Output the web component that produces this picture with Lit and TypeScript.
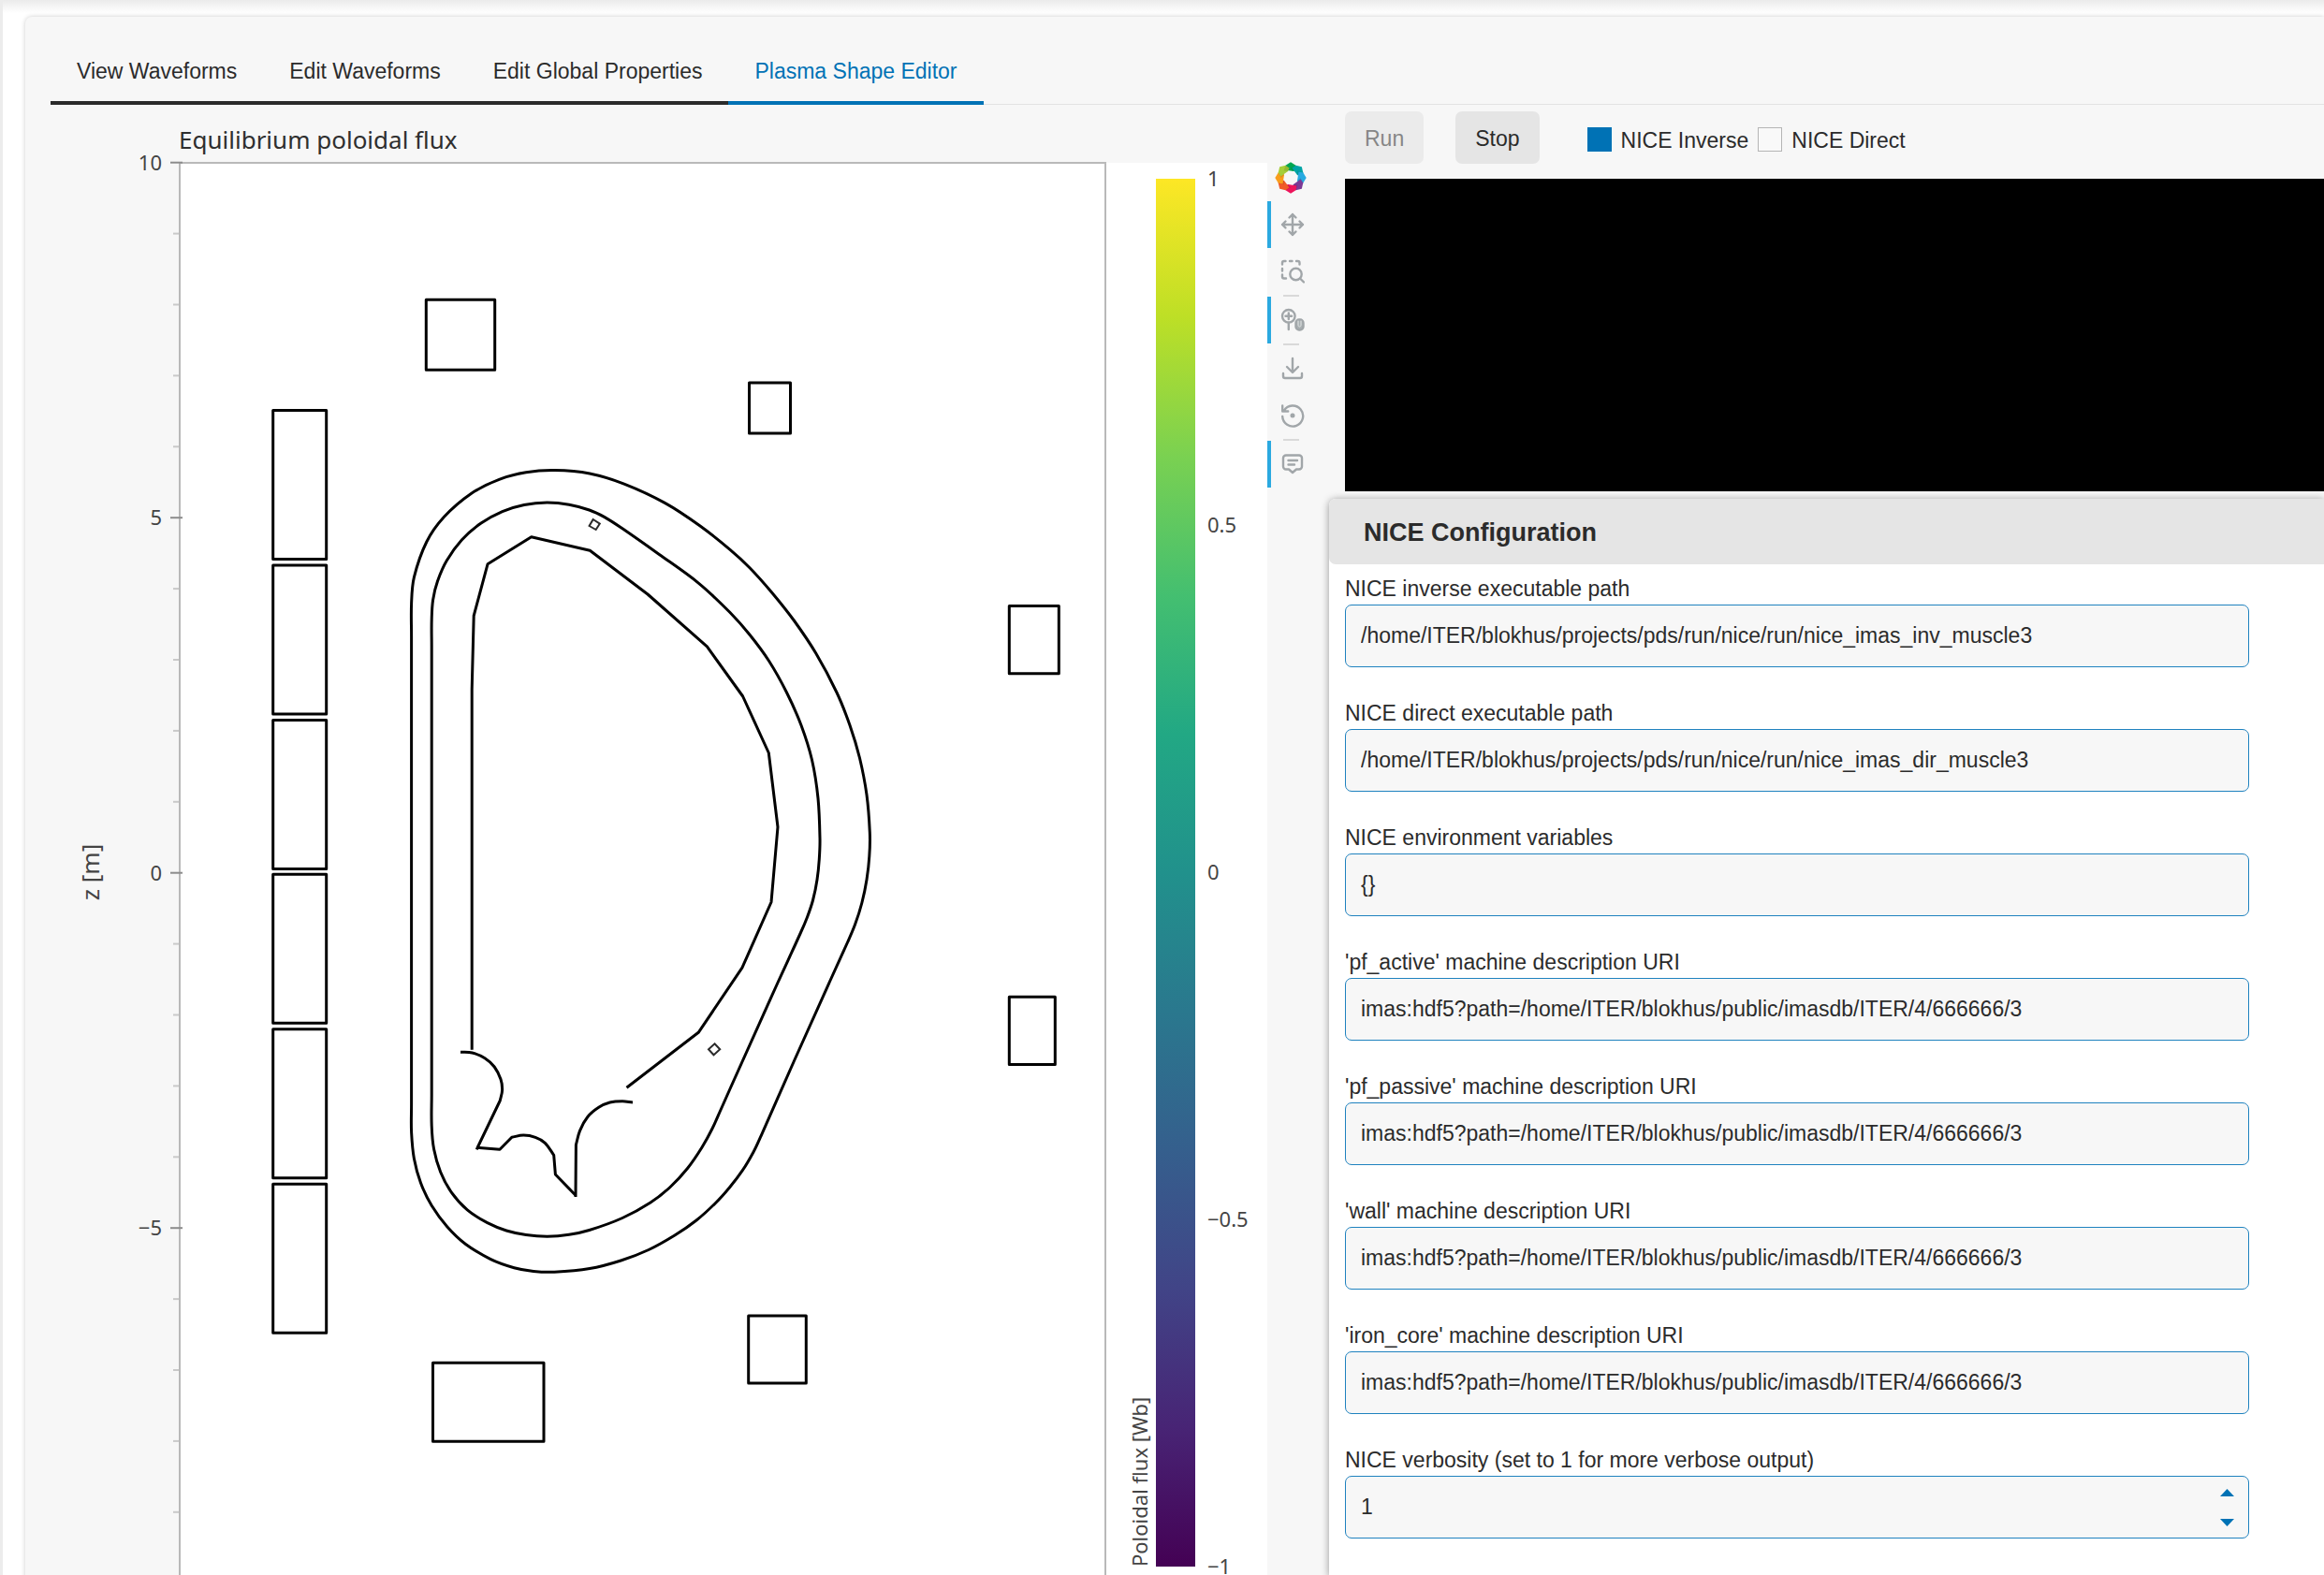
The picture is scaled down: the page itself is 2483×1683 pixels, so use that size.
import { LitElement, html, css, svg } from "lit";
import { customElement, property, state } from "lit/decorators.js";
import { classMap } from "lit/directives/class-map.js";

type Pt = [number, number];

/** Smooth spline through the points, written as a cubic Bézier path. */
function smooth(points: Pt[], closed = false): string {
  const n = points.length;
  const at = (i: number): Pt =>
    closed ? points[(i + n) % n] : points[Math.max(0, Math.min(n - 1, i))];
  let d = `M${points[0][0]} ${points[0][1]}`;
  const last = closed ? n : n - 1;
  for (let i = 0; i < last; i++) {
    const [p0, p1, p2, p3] = [at(i - 1), at(i), at(i + 1), at(i + 2)];
    const len = Math.hypot(p2[0] - p1[0], p2[1] - p1[1]);
    const h = (a: Pt, b: Pt): Pt => {
      const l = Math.hypot(b[0] - a[0], b[1] - a[1]) || 1;
      return [((b[0] - a[0]) / l) * (len / 3), ((b[1] - a[1]) / l) * (len / 3)];
    };
    const t1 = h(p0, p2);
    const t2 = h(p1, p3);
    d += `C${(p1[0] + t1[0]).toFixed(1)} ${(p1[1] + t1[1]).toFixed(1)} ${(p2[0] - t2[0]).toFixed(1)} ${(p2[1] - t2[1]).toFixed(1)} ${p2[0]} ${p2[1]}`;
  }
  return closed ? d + "Z" : d;
}

const OUTER: Pt[] = [
  [439.6, 645], [442.4, 616.8], [455.8, 579], [474.3, 552.5], [503.3, 527.5], [533.3, 512.3],
  [562, 504.8], [592.4, 502.6], [630, 506], [666.8, 517.1], [710.7, 537.6],
  [748, 562], [780, 587.3], [801, 606.7], [824.3, 632.7], [848.3, 663], [871.7, 698],
  [894, 740], [908, 775], [918.5, 810], [926, 849.3], [929.3, 889.5], [928.8, 915],
  [926, 940], [920.8, 965], [913.5, 988], [905.5, 1007], [886, 1050], [848.3, 1134],
  [813.3, 1213.3], [805, 1231], [793.3, 1250.7], [780, 1268.3], [764.8, 1285.2],
  [744, 1304], [720.9, 1320], [693, 1335.5], [663.4, 1347], [630, 1355.6], [592.4, 1359.2],
  [570, 1358.4], [549.3, 1354.7], [524.3, 1345.6], [497.5, 1329.5], [477.9, 1311],
  [461.2, 1288.3], [449.5, 1264], [442.4, 1238], [439.6, 1210], [439.6, 1180], [439.6, 680],
];

const INNER: Pt[] = [
  [461.2, 662], [462.6, 641], [467.5, 621], [477.3, 599], [493.3, 577], [514, 559],
  [536.7, 546.6], [560, 539.5], [584.6, 537], [608, 539.2], [629.6, 545],
  [646, 552.6], [665, 564.8], [704, 592.2], [746, 622.8], [780, 654.5],
  [801, 678.3], [821.7, 706.5], [840.5, 740], [856, 775], [867.5, 812], [874, 853], [876, 895.2],
  [875.3, 918], [873, 940], [868.5, 962], [862.5, 980], [855.5, 996.5], [831, 1050], [780, 1163.5],
  [770, 1186], [761, 1206], [750, 1226], [734.5, 1248.5], [716, 1268.5], [695, 1285],
  [665, 1301.5], [629.6, 1314.5], [608, 1319.3], [584.6, 1321.2], [562, 1319.5], [541, 1315],
  [520.7, 1306.7], [499.3, 1292.8], [482.5, 1274.3], [470.7, 1252.5], [463.6, 1228],
  [461.2, 1203], [461.2, 1170], [461.2, 690],
];

const LIMITER =
  "504.2,1121.7 504.2,736.4 506.2,658 521,602.8 567.7,573.8 630.3,588.3 692,635 755.4,690.9 793.6,744 821.3,804.5 831,883.7 824,964 792.9,1034.2 746.2,1103.3 669.5,1162.3";

const DIVERTOR_LEFT = smooth([
  [492, 1124.3], [504.5, 1125], [518, 1130.7], [528.2, 1140], [535, 1153.3], [536.6, 1165], [534.3, 1176],
]) + "L509.2 1228.3";
const DIVERTOR_DOME =
  "M509.2 1226.3L534 1228.3L546.8 1215.3" +
  smooth([[546.8, 1215.3], [559.3, 1213], [572, 1215.3], [582.3, 1221.3], [591.7, 1234.3]]).replace(/^M[^C]+/, "") +
  "L593.4 1255L615 1277.3";
const DIVERTOR_RIGHT = "M615 1279L615.4 1223.3" +
  smooth([[615.4, 1223.3], [619.5, 1208.3], [628, 1193.3], [639.7, 1183.3], [651.6, 1178], [665, 1176.7], [676, 1178]]).replace(/^M[^C]+/, "");

/** Coil outlines: x, y, width, height. */
const COILS = [
  [291.7, 438.5, 57, 159], [291.7, 604, 57, 159], [291.7, 769.5, 57, 159],
  [291.7, 934.3, 57, 159], [291.7, 1099.8, 57, 159], [291.7, 1265.3, 57, 159],
  [455.3, 320.3, 73.4, 75], [800.5, 409, 44, 54], [1078.3, 647.4, 53, 72.3],
  [1078.3, 1065.2, 49, 72.3], [799.7, 1406, 61.6, 72], [462.5, 1456.3, 118.5, 84],
];

const VIRIDIS = ["#440154", "#482475", "#414487", "#355f8d", "#2a788e", "#21918c", "#22a884", "#44bf70", "#7ad151", "#bddf26", "#fde725"];

const yOf = (z: number) => 932.7 - z * 75.9;

@customElement("flux-plot")
class FluxPlot extends LitElement {
  static styles = css`
    :host { display: block; }
    .plot { display: block; width: 100%; height: auto; font-family: "Noto Sans", "Open Sans", sans-serif; }
    .title { font-size: 26px; fill: #2f2f2f; }
    .tick { font-size: 22px; fill: #444; }
    .axis { font-size: 26px; fill: #444; }
    .bar-title { font-size: 22px; fill: #444; }
    .frame { stroke: #b9b9b9; stroke-width: 2; fill: none; }
    .major { stroke: #8c8c8c; stroke-width: 2; }
    .minor { stroke: #c9c9c9; stroke-width: 2; }
    .shape { fill: none; stroke: #000; stroke-width: 3; stroke-linejoin: round; }
    .probe { fill: none; stroke: #2a2a2a; stroke-width: 2; }
  `;

  render() {
    const minors = Array.from({ length: 21 }, (_, i) => 10 - i).filter((z) => z % 5 !== 0);
    return html`<svg class="plot" viewBox="54 112 1300 1600" role="img" aria-label="Equilibrium poloidal flux">
      <defs>
        <linearGradient id="viridis" x1="0" y1="1" x2="0" y2="0">
          ${VIRIDIS.map((c, i) => svg`<stop offset=${i / 10} stop-color=${c}></stop>`)}
        </linearGradient>
      </defs>
      <rect x="192" y="174" width="1162" height="1540" fill="#fff"></rect>
      <path class="frame" d="M192 1712V174H1181V1712"></path>
      ${minors.map((z) => svg`<line class="minor" x1="185" x2="191" y1=${yOf(z)} y2=${yOf(z)}></line>`)}
      ${[10, 5, 0, -5, -10].map((z) => svg`
        <line class="major" x1="182" x2="195" y1=${yOf(z)} y2=${yOf(z)}></line>
        <text class="tick" x="173" y=${yOf(z) + 8} text-anchor="end">${String(z).replace("-", "−")}</text>`)}
      <text class="title" x="191" y="159">Equilibrium poloidal flux</text>
      <text class="axis" text-anchor="middle" transform="translate(106 932) rotate(-90)">z [m]</text>
      ${COILS.map(([x, y, w, h]) => svg`<rect class="shape" x=${x} y=${y} width=${w} height=${h}></rect>`)}
      <path class="shape" d=${smooth(OUTER, true)}></path>
      <path class="shape" d=${smooth(INNER, true)}></path>
      <polyline class="shape" points=${LIMITER}></polyline>
      <path class="shape" d=${DIVERTOR_LEFT}></path>
      <path class="shape" d=${DIVERTOR_DOME}></path>
      <path class="shape" d=${DIVERTOR_RIGHT}></path>
      <polygon class="probe" points="633.7,555 640.8,559.6 636.7,566 629.6,562"></polygon>
      <polygon class="probe" points="763.5,1115.3 769.2,1121.3 762.5,1127.3 757,1121.3"></polygon>
      <rect x="1235" y="191" width="42" height="1483" fill="url(#viridis)"></rect>
      ${[1, 0.5, 0, -0.5, -1].map((v) => svg`<text class="tick" x="1290" y=${932 - v * 741.5 + 8}>${String(v).replace("-", "−")}</text>`)}
      <text class="bar-title" transform="translate(1226 1674) rotate(-90)">Poloidal flux [Wb]</text>
    </svg>`;
  }
}

const TOOLS = [
  {
    label: "Pan", active: true, rule: false,
    art: svg`<path d="M12 1v22M1 12h22M8.500 4.500L12 1l3.500 3.500M8.500 19.500L12 23l3.500-3.500M4.500 8.500L1 12l3.500 3.500M19.500 8.500L23 12l-3.500 3.500"></path>`,
  },
  {
    label: "Box Zoom", active: false, rule: false,
    art: svg`<path d="M1 4.500V3a2 2 0 0 1 2-2h1.500M9 1h2.500M16 1h1.500a2 2 0 0 1 2 2v1.500M1 9v2.500M1 15.500v2a2 2 0 0 0 2 2h2"></path><circle cx="15.500" cy="15" r="6.200"></circle><path d="M20 19.500l4 4"></path>`,
  },
  {
    label: "Wheel Zoom", active: true, rule: true,
    art: svg`<circle cx="7.800" cy="7.800" r="6.800"></circle><path d="M7.800 14.600V22M7.800 4.500v6.600M4.500 7.800h6.600"></path><rect x="15.500" y="11.500" width="8" height="11" rx="3.500" fill="#a9b0b2"></rect><path d="M18 13v4.500c0 2 3 2 3 0V13" stroke="#e3e5e5" stroke-width="1"></path>`,
  },
  {
    label: "Save", active: false, rule: true,
    art: svg`<path d="M12 1v14M6 10l6 6 6-6M2 17v3a2 2 0 0 0 2 2h16a2 2 0 0 0 2-2v-3"></path>`,
  },
  {
    label: "Reset", active: false, rule: false,
    art: svg`<path d="M1.200 13A11 11 0 1 0 2.800 6.800M1.200 1.500v6h6"></path><circle cx="12" cy="12" r="1.300" fill="#a1a6a9"></circle>`,
  },
  {
    label: "Hover", active: true, rule: true,
    art: svg`<path d="M5 2.500h14a3 3 0 0 1 3 3v9a3 3 0 0 1-3 3h-3l-4 3.500-4-3.500h-3a3 3 0 0 1-3-3v-9a3 3 0 0 1 3-3zM7.500 8h9.500M7.500 12.500h6.500"></path>`,
  },
];

const PETALS = ["#00a651", "#00a4a6", "#27aae1", "#7b3a96", "#ed145b", "#f15a29", "#f99d1c", "#a6ce39"];

@customElement("plot-toolbar")
class PlotToolbar extends LitElement {
  static styles = css`
    :host { display: block; }
    .bar { display: flex; flex-direction: column; padding-top: 61px; }
    .logo { display: block; width: 34px; height: 34px; margin: 0 0 8px 8px; }
    .tool {
      display: flex; align-items: center; box-sizing: border-box; width: 50px; height: 50px;
      padding: 0 0 0 10px; border: 0; border-left: 4px solid transparent; background: none;
    }
    .tool.active { border-left-color: #2ba9e0; }
    .icon { width: 26px; height: 26px; fill: none; stroke: #a1a6a9; stroke-width: 2.4; stroke-linecap: round; stroke-linejoin: round; }
    .rule { width: 17px; height: 2px; margin: 0 0 0 17px; border: 0; background: #d9d9d9; }
  `;

  render() {
    return html`<div class="bar" role="toolbar">
      <svg class="logo" viewBox="-17 -17 34 34" aria-hidden="true">
        ${PETALS.map((c, i) => svg`<g transform=${`rotate(${i * 45})`}>
          <path d="M-5.500 -13.300L0 -16.700L5.500 -13.300L6.500 -8.500L2.900 -7L-6.500 -8.500Z" fill=${c}></path>
          <path d="M0 -10.500L5.500 -13.300L6.500 -8.500L2.900 -7Z" fill="#000" opacity="0.100"></path></g>`)}
      </svg>
      ${TOOLS.map((t) => html`
        ${t.rule ? html`<hr class="rule" />` : ""}
        <button class=${classMap({ tool: true, active: t.active })} type="button" aria-label=${t.label}>
          <svg class="icon" viewBox="-1 -1 26 26">${t.art}</svg>
        </button>`)}
    </div>`;
  }
}

@customElement("config-field")
class ConfigField extends LitElement {
  @property() label = "";
  @property() value = "";
  @property() type = "text";

  static styles = css`
    :host { display: block; }
    .field { display: flex; flex-direction: column; gap: 2px; }
    .label { font-size: 23px; line-height: 30px; color: #2b2b2b; }
    .wrap { position: relative; display: flex; }
    .input {
      box-sizing: border-box; width: 100%; height: 67px; padding: 0 16px; border: 1px solid #1f82bf;
      border-radius: 7px; background: #f7f7f7; color: #2b2b2b; font: 23px/30px "Liberation Sans", Arial, sans-serif;
      outline: none; appearance: textfield;
    }
    .input::-webkit-inner-spin-button { appearance: none; margin: 0; }
    .steps { position: absolute; right: 9px; top: 1px; bottom: 1px; display: flex; flex-direction: column; justify-content: center; }
    .step { display: flex; align-items: center; justify-content: center; width: 30px; height: 32px; padding: 0; border: 0; background: none; }
    .arrow { width: 15px; height: 8px; fill: #0072b5; }
  `;

  private step(by: number) {
    this.value = String(Number(this.value) + by);
  }

  render() {
    return html`<div class="field">
      <label class="label" for="box">${this.label}</label>
      <div class="wrap">
        <input class="input" id="box" type=${this.type} .value=${this.value} />
        ${this.type === "number" ? html`<div class="steps">
          <button class="step" type="button" aria-label="Increase" @click=${() => this.step(1)}><svg class="arrow" viewBox="0 0 15 8"><path d="M0 8L7.500 0L15 8Z"></path></svg></button>
          <button class="step" type="button" aria-label="Decrease" @click=${() => this.step(-1)}><svg class="arrow" viewBox="0 0 15 8"><path d="M0 0H15L7.500 8Z"></path></svg></button>
        </div>` : ""}
      </div>
    </div>`;
  }
}

const TABS = ["View Waveforms", "Edit Waveforms", "Edit Global Properties", "Plasma Shape Editor"];
const URI = "imas:hdf5?path=/home/ITER/blokhus/public/imasdb/ITER/4/666666/3";
const FIELDS = [
  ["NICE inverse executable path", "/home/ITER/blokhus/projects/pds/run/nice/run/nice_imas_inv_muscle3"],
  ["NICE direct executable path", "/home/ITER/blokhus/projects/pds/run/nice/run/nice_imas_dir_muscle3"],
  ["NICE environment variables", "{}"],
  ["'pf_active' machine description URI", URI],
  ["'pf_passive' machine description URI", URI],
  ["'wall' machine description URI", URI],
  ["'iron_core' machine description URI", URI],
];

@customElement("app-root")
class AppRoot extends LitElement {
  @state() private tab = 3;

  static styles = css`
    :host {
      display: block; box-sizing: border-box; height: 100vh; overflow: hidden; padding: 18px 0 0 24px;
      border-left: 3px solid #ececec; background: linear-gradient(#ebebeb, #fff 14px);
      font: 23px/30px "Liberation Sans", Arial, sans-serif; color: #2b2b2b;
    }
    .card { min-height: 100%; border-radius: 7px 0 0 0; background: #f7f7f7; box-shadow: 0 0 5px #0003; padding-left: 27px; }
    .tabs { display: flex; height: 94px; box-sizing: border-box; padding-top: 25px; box-shadow: inset 0 -1px #e3e3e3; }
    .tab {
      padding: 0 28px; border: 0; border-bottom: 4px solid #2b2b2b; background: none;
      font: inherit; color: #2b2b2b; white-space: nowrap;
    }
    .tab.on { border-color: #0072b5; color: #0072b5; }
    .body { display: grid; grid-template-columns: 1366fr 1063fr; align-items: start; }
    .left { display: grid; grid-template-columns: minmax(0, 1fr) 66px; }
    .controls { display: flex; align-items: center; gap: 34px; padding: 7px 0 0 17px; }
    .btn { height: 56px; padding: 2px 21px 0; border: 0; border-radius: 7px; background: #e5e5e5; color: #2b2b2b; font: inherit; }
    .btn:disabled { background: #ebebeb; color: #868686; }
    .checks { display: flex; gap: 10px; margin: 5px 0 0 17px; }
    .check { display: flex; align-items: center; gap: 10px; }
    .box { appearance: none; width: 26px; height: 26px; margin: 0 0 2px; border: 1px solid #b5b5b5; background: #f9f9f9; }
    .box:checked { border-color: #0072b5; background: #0072b5; }
    .screen { height: 334px; margin: 16px 0 0 17px; background: #000; }
    .config { margin-top: 8px; border-radius: 7px 0 0 0; background: #fff; box-shadow: 0 1px 9px #0006; }
    .heading { margin: 0; padding: 2px 0 0 37px; border-radius: 7px 0 0 7px; background: #e5e5e5; font-size: 27px; line-height: 68px; }
    .form { display: grid; gap: 34px; padding: 11px 80px 40px 17px; }
  `;

  render() {
    return html`<main class="card">
      <nav class="tabs" role="tablist">
        ${TABS.map((t, i) => html`<button type="button" role="tab" aria-selected=${i === this.tab}
          class=${classMap({ tab: true, on: i === this.tab })} @click=${() => (this.tab = i)}>${t}</button>`)}
      </nav>
      <div class="body">
        <section class="left">
          <flux-plot></flux-plot>
          <plot-toolbar></plot-toolbar>
        </section>
        <section class="right">
          <div class="controls">
            <button class="btn" type="button" disabled>Run</button>
            <button class="btn" type="button">Stop</button>
            <div class="checks">
              <label class="check"><input class="box" type="checkbox" checked />NICE Inverse</label>
              <label class="check"><input class="box" type="checkbox" />NICE Direct</label>
            </div>
          </div>
          <div class="screen"></div>
          <section class="config">
            <h2 class="heading">NICE Configuration</h2>
            <form class="form">
              ${FIELDS.map(([l, v]) => html`<config-field label=${l} value=${v}></config-field>`)}
              <config-field type="number" label="NICE verbosity (set to 1 for more verbose output)" value="1"></config-field>
            </form>
          </section>
        </section>
      </div>
    </main>`;
  }
}
